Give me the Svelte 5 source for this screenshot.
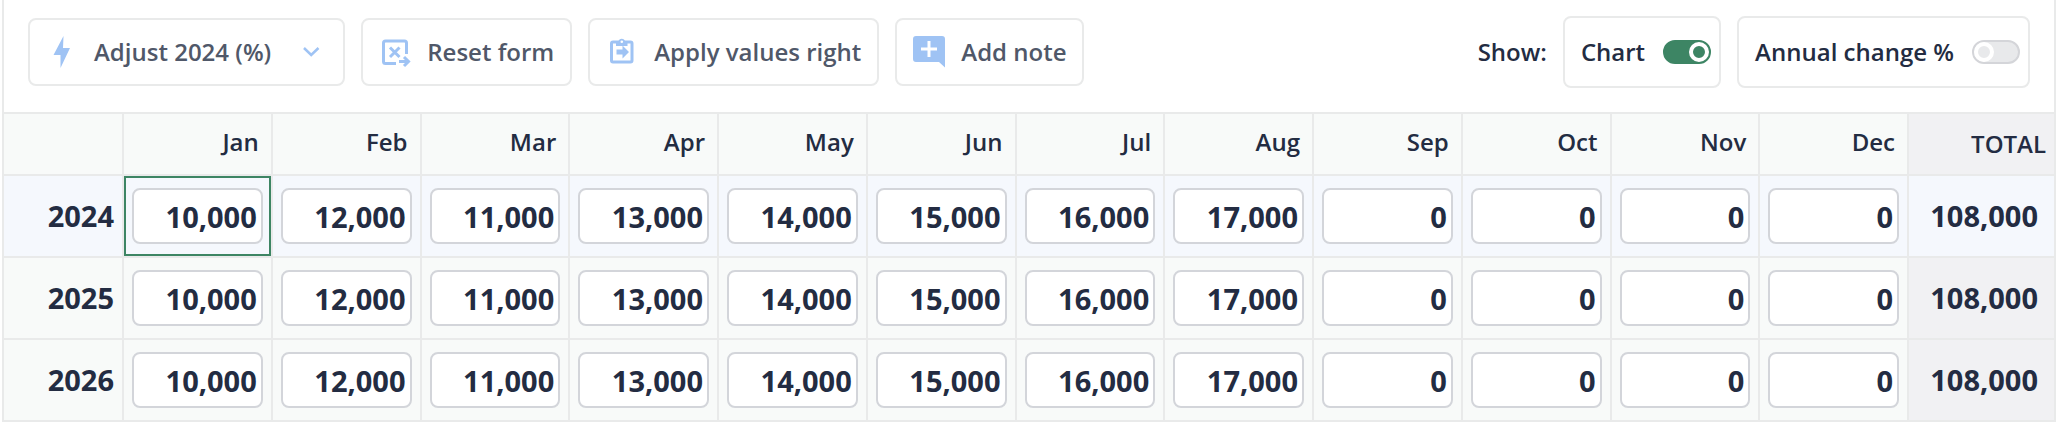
<script>
  const months = ['Jan', 'Feb', 'Mar', 'Apr', 'May', 'Jun', 'Jul', 'Aug', 'Sep', 'Oct', 'Nov', 'Dec'];
  const base = [10000, 12000, 11000, 13000, 14000, 15000, 16000, 17000, 0, 0, 0, 0];
  const format = (n) => n.toLocaleString('en-US');
  let rows = $state([2024, 2025, 2026].map((year) => ({ year, values: [...base] })));
  let active = $state({ row: 0, col: 0 });
  let showChart = $state(true);
  let showChange = $state(false);

  const total = (row) => row.values.reduce((a, b) => a + b, 0);
  function update(r, c, text) {
    rows[r].values[c] = Number(text.replace(/[^0-9.-]/g, '')) || 0;
  }
</script>

<main>
  <div class="toolbar">
    <div class="group">
      <button type="button" class="adjust">
        <svg width="32" height="34" viewBox="0 0 32 34" aria-hidden="true"><path d="M17.500 1L7.500 20h7L14.500 33L24 13h-7z" fill="currentColor" /></svg>
        <span>Adjust 2024 (%)</span>
        <svg width="24" height="24" viewBox="0 0 24 24" aria-hidden="true"><path d="M5 8l7.200 7L19.500 8" fill="none" stroke="currentColor" stroke-width="2.500" /></svg>
      </button>
      <button type="button">
        <svg width="32" height="32" viewBox="0 0 32 32" aria-hidden="true"><path d="M17 27.500H6.500a2 2 0 0 1-2-2V7a2 2 0 0 1 2-2h19a2 2 0 0 1 2 2v11M11 11.500l9.500 9.500M20.500 11.500l-9.500 9.500M20 25.500h9M25 21l4.500 4.500l-4.500 4.500" fill="none" stroke="currentColor" stroke-width="3" /></svg>
        <span>Reset form</span>
      </button>
      <button type="button">
        <svg width="32" height="32" viewBox="0 0 32 32" aria-hidden="true"><rect x="5.500" y="6" width="20.500" height="20" rx="1.500" fill="none" stroke="currentColor" stroke-width="3" /><path d="M10 10V5.500h2.500a3.300 3.300 0 0 1 6.500 0h2.500v4.500zM10.500 13.500h6v-4l6.500 6.500l-6.500 6.500v-4h-6z" fill="currentColor" /><circle cx="15.800" cy="5.800" r="1.300" fill="#fff" /></svg>
        <span>Apply values right</span>
      </button>
      <button type="button">
        <svg width="32" height="32" viewBox="0 0 32 32" aria-hidden="true"><path d="M3 0h26a3 3 0 0 1 3 3v28.500l-6-5.500H3a3 3 0 0 1-3-3V3a3 3 0 0 1 3-3z" fill="currentColor" /><path d="M16 5v16M8 13h16" stroke="#fff" stroke-width="3" /></svg>
        <span>Add note</span>
      </button>
    </div>
    <div class="group">
      <span>Show:</span>
      <label class="toggle">Chart <input type="checkbox" role="switch" bind:checked={showChart} /></label>
      <label class="toggle">Annual change % <input type="checkbox" role="switch" bind:checked={showChange} /></label>
    </div>
  </div>

  <table>
    <colgroup>
      <col class="year-col" />
      {#each months as month (month)}<col />{/each}
      <col class="total-col" />
    </colgroup>
    <thead>
      <tr>
        <td></td>
        {#each months as month (month)}<th scope="col">{month}</th>{/each}
        <th scope="col" class="total">TOTAL</th>
      </tr>
    </thead>
    <tbody>
      {#each rows as row, r (row.year)}
        <tr class:current={r === active.row}>
          <th scope="row">{row.year}</th>
          {#each row.values as value, c}
            <td class:active={r === active.row && c === active.col}>
              <input
                type="text"
                inputmode="numeric"
                aria-label="{months[c]} {row.year}"
                value={format(value)}
                onfocus={() => (active = { row: r, col: c })}
                onchange={(e) => update(r, c, e.currentTarget.value)}
              />
            </td>
          {/each}
          <td class="total">{format(total(row))}</td>
        </tr>
      {/each}
    </tbody>
  </table>
</main>

<style>
  :global(body) {
    background: #fff;
  }

  main {
    --line: #e9eaea;
    --ink: #232c42;
    --green: #3d8564;
    margin: 0 16px 0 2px;
    border-left: 2px solid var(--line);
    color: var(--ink);
    font-family: 'Open Sans', 'Noto Sans', sans-serif;
    font-size: 24px;
    font-weight: 700;
    line-height: 32px;
  }

  .toolbar {
    display: flex;
    justify-content: space-between;
    align-items: center;
    padding: 16px 24px 24px;
    border-right: 2px solid var(--line);
    font-weight: 600;
  }

  .group {
    display: flex;
    align-items: center;
    gap: 16px;
  }

  button,
  .toggle {
    display: flex;
    align-items: center;
    box-sizing: border-box;
    border: 2px solid var(--line);
    border-radius: 8px;
    background: #fff;
    white-space: nowrap;
    cursor: pointer;
  }

  button {
    gap: 16px;
    height: 68px;
    padding: 0 16px;
    color: #505869;
    font: inherit;
  }

  .adjust {
    padding-right: 20px;
  }

  .adjust span {
    margin-right: 12px;
  }

  button svg {
    flex: none;
    color: #9fc3f4;
  }

  .toggle {
    gap: 18px;
    height: 72px;
    padding: 0 8px 0 16px;
  }

  .toggle input {
    appearance: none;
    display: flex;
    align-items: center;
    box-sizing: border-box;
    width: 48px;
    height: 24px;
    margin: 0;
    border: 2px solid #d4d5d9;
    border-radius: 12px;
    background: #e8e9eb;
    cursor: pointer;
  }

  .toggle input::before {
    content: '';
    box-sizing: border-box;
    width: 20px;
    height: 20px;
    border: 4px solid #fff;
    border-radius: 50%;
  }

  .toggle input:checked {
    justify-content: flex-end;
    border-color: var(--green);
    background: var(--green);
  }

  table {
    width: 100%;
    table-layout: fixed;
    border-spacing: 0;
    border-top: 2px solid var(--line);
  }

  .year-col {
    width: 120px;
  }

  .total-col {
    width: 147px;
  }

  th,
  td {
    box-sizing: border-box;
    height: 82px;
    padding: 0 8px;
    border-right: 2px solid var(--line);
    border-bottom: 2px solid var(--line);
    background: #f8faf9;
    text-align: right;
  }

  thead th,
  thead td {
    height: 62px;
    padding: 0 12px 4px;
    font-weight: 600;
  }

  thead .total {
    padding: 0 8px;
  }

  tbody {
    font-size: 29px;
  }

  .total {
    background: #f1f1f3;
  }

  tbody .total {
    padding-right: 16px;
  }

  .current th,
  .current td {
    background: #f5f8fd;
  }

  td.active {
    background-clip: padding-box;
    box-shadow: inset 0 0 0 2px var(--green);
  }

  td input {
    display: block;
    box-sizing: border-box;
    width: 100%;
    height: 56px;
    padding: 0 4px;
    border: 2px solid #d3d5da;
    border-radius: 8px;
    outline: none;
    background: #fff;
    color: inherit;
    font: inherit;
    text-align: right;
  }
</style>
